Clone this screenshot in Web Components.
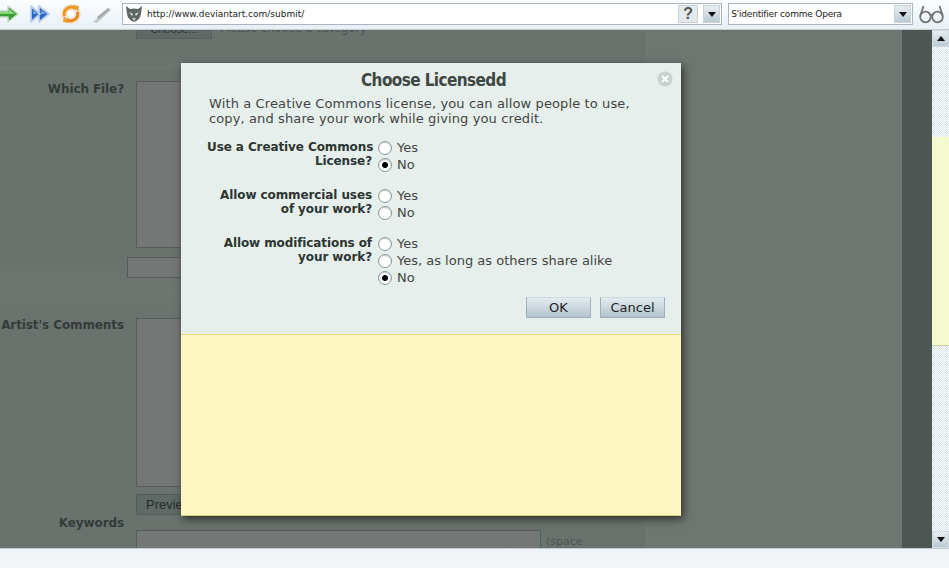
<!DOCTYPE html>
<html>
<head>
<meta charset="utf-8">
<title>Submit</title>
<style>
  html, body { margin: 0; height: 100%; overflow: hidden; }
  body { display: flex; flex-direction: column; width: 949px; height: 568px; font-family: "DejaVu Sans", sans-serif; }
</style>
</head>
<body>
<browser-toolbar></browser-toolbar>
<page-view>
  <license-dialog></license-dialog>
</page-view>
<status-strip></status-strip>

<script>
class BrowserToolbar extends HTMLElement {
  constructor() {
    super();
    this.attachShadow({ mode: "open" });
  }
  connectedCallback() {
    this.shadowRoot.innerHTML = `
      <style>
        :host {
          display: flex; align-items: center; flex: none; height: 30px; box-sizing: border-box;
          background: linear-gradient(#fbfdfe, #e8f0f5); border-bottom: 1px solid #c3ccd1;
          padding: 0 5px 1px 0; overflow: hidden;
        }
        svg { display: block; flex: none; }
        .nav { display: flex; align-items: center; gap: 9px; margin-left: -2px; margin-right: 9px; }
        .combo {
          display: flex; align-items: center; box-sizing: border-box; height: 22px; background: #fff;
          border: 1px solid #a9b6bd; font: 9px "DejaVu Sans", sans-serif; color: #222; white-space: nowrap;
        }
        .addr { width: 601px; }
        .addr .url { flex: 1; margin-left: 3px; }
        .fav { margin-left: 1px; }
        .btn {
          box-sizing: border-box; height: 18px; display: flex; align-items: center; justify-content: center;
          background: linear-gradient(#e7eef2, #bccad3); border: 1px solid #c7d1d7;
        }
        .q { width: 20px; font: bold 16px "Liberation Sans", sans-serif; color: #555; background: #e3e9ec; margin-right: 5px; }
        .dd { width: 17px; margin-right: 1px; flex: none; }
        .dd::after { content: ""; border: 4px solid transparent; border-top: 5px solid #111; border-bottom: 0; }
        .who { width: 185px; margin-left: 6px; }
        .who .name { flex: 1; margin-left: 2px; letter-spacing: -.2px; }
        .glasses { margin-left: 6px; }
      </style>
      <div class="nav">
        <svg width="22" height="22" viewBox="0 0 22 22"><path d="M1 8h9V3l10 8-10 8v-5H1z" fill="#35a032" stroke="#c9d8ca" stroke-width="1.500" stroke-linejoin="round"/><path d="M2 9h9V6l6 5H2z" fill="#86d978"/></svg>
        <svg width="22" height="22" viewBox="0 0 22 22"><path d="M2 3l9 8-9 8zM10 3l10 8-10 8z" fill="#2a66c8" stroke="#bcd0ea" stroke-width="1.800" stroke-linejoin="round"/><path d="M4 7l5 4H4zM12 7l5 4h-5z" fill="#6ea3ea"/></svg>
        <svg width="22" height="22" viewBox="0 0 22 22"><circle cx="11" cy="11" r="10" fill="#eddcc0" opacity=".7"/><path d="M4.500 13A7 7 0 0 1 16 6" fill="none" stroke="#ee9420" stroke-width="3"/><path d="M17.500 9A7 7 0 0 1 6 16" fill="none" stroke="#ea851c" stroke-width="3"/><path d="M13 2l6 1-1 6zM9 20l-6-1 1-6z" fill="#f0a030"/><circle cx="11" cy="11" r="3.500" fill="#fff"/></svg>
        <svg width="22" height="22" viewBox="0 0 22 22"><path d="M2 19L17 6l3 1L6 20z" fill="#c3c9cb"/><path d="M6 14l11-9 2 1-11 10z" fill="#a0a8ab"/></svg>
      </div>
      <div class="combo addr">
        <svg class="fav" width="20" height="18" viewBox="0 0 20 18"><path d="M2 1l4 3q4-1 8 0l4-3-1 8q-1 6-7 8-6-2-7-8z" fill="#5d6664"/><path d="M5 7l4 2-1 2zM15 7l-4 2 1 2z" fill="#e4e9e7"/><path d="M8 13h4l-2 3z" fill="#c5cdca"/></svg>
        <span class="url">http://www.deviantart.com/submit/</span>
        <span class="btn q">?</span>
        <span class="btn dd"></span>
      </div>
      <div class="combo who"><span class="name">S'identifier comme Opera</span><span class="btn dd"></span></div>
      <svg class="glasses" width="25" height="20" viewBox="0 0 25 20" fill="none" stroke="#6e7476" stroke-width="1.800"><circle cx="6.500" cy="13" r="5.300"/><circle cx="18.500" cy="13" r="5.300"/><path d="M11.500 11.500q1-1 2 0M1.500 11l3-9M23.500 11l-3-9"/></svg>
    `;
  }
}

class FormRow extends HTMLElement {
  constructor() {
    super();
    this.attachShadow({ mode: "open" });
  }
  connectedCallback() {
    this.shadowRoot.innerHTML = `
      <style>
        :host { display: grid; grid-template-columns: 124px 1fr; column-gap: 12px; }
        .label { font: bold 12px/16px "DejaVu Sans", sans-serif; color: #333c38; text-align: right; white-space: nowrap; letter-spacing: -.1px; margin-top: var(--label-top, 0); }
      </style>
      <div class="label">${this.getAttribute("label") || ""}</div>
      <div><slot></slot></div>
    `;
  }
}

class PageView extends HTMLElement {
  constructor() {
    super();
    this.attachShadow({ mode: "open" });
  }
  connectedCallback() {
    this.shadowRoot.innerHTML = `
      <style>
        :host { display: flex; flex: none; height: 518px; position: relative; overflow: hidden; background: #6e7672; }
        .form { width: 645px; flex: none; background: #6a726e; display: flex; flex-direction: column; overflow: hidden; }
        .gap { flex: 1; }
        .dark { width: 30px; flex: none; background: #4d5652; }
        .band { flex: none; box-sizing: border-box; }
        .top { height: 40px; display: flex; padding-left: 136px; align-items: flex-start; gap: 8px; background: linear-gradient(#6a726e 60%, #6d7571); }
        .choose { box-sizing: border-box; width: 76px; height: 20px; margin-top: -11px; background: #5f6866; border: 1px solid #555e5b; font: 11px/18px "Liberation Sans", sans-serif; color: #2c3431; text-align: center; flex: none; }
        .hint { font: 11.500px/1 "DejaVu Sans", sans-serif; color: #4c5551; margin-top: -7px; white-space: nowrap; }
        .which { height: 221px; padding-top: 11px; background: linear-gradient(#6a726e 85%, #6e7672); }
        .comments { height: 257px; padding-top: 27px; background: linear-gradient(#6e7672, #6a726e 12%); --label-top: -1px; }
        .which { --label-top: 0px; }
        .box { box-sizing: border-box; background: #737776; border: 1px solid #545d59; }
        .b1 { width: 400px; height: 167px; }
        .input { width: 400px; height: 21px; margin: 9px 0 0 -9px; }
        .b2 { width: 400px; height: 169px; }
        .prev { box-sizing: border-box; width: 90px; height: 21px; margin-top: 7px; background: #5f6966; border: 1px solid #555e5a; font: 13px/19px "Liberation Sans", sans-serif; color: #252c29; padding-left: 9px; }
        .kw-row { margin-top: 1px; }
        .kw-line { display: flex; gap: 5px; align-items: flex-start; padding-top: 14px; }
        .kw-input { width: 405px; height: 30px; border-bottom: 0; flex: none; }
        .space { font: 11px/14px "DejaVu Sans", sans-serif; color: #4c5551; padding-top: 5px; }
        .scroll { width: 17px; flex: none; display: flex; flex-direction: column;
          background-color: #fff;
          background-image: conic-gradient(#d7e1e8 25%, #fff 0 50%, #d7e1e8 0 75%, #fff 0);
          background-size: 2px 2px; }
        .arrow { height: 17px; flex: none; box-sizing: border-box; background: linear-gradient(#e7eef2, #bccad3); border: 1px solid #d2dbe0; display: flex; align-items: center; justify-content: center; }
        .arrow::after { content: ""; border: 4px solid transparent; }
        .up::after { border-bottom: 5px solid #111; border-top: 0; }
        .down::after { border-top: 5px solid #111; border-bottom: 0; }
        .track { flex: 1; padding-top: 90px; }
        .thumb { height: 209px; box-sizing: border-box; background: #f4facd; border-bottom: 1px solid #c9d3a5; }
      </style>
      <div class="form">
        <div class="band top"><div class="choose">Choose...</div><div class="hint">Please choose a category</div></div>
        <div class="band which"><form-row label="Which File?"><div class="box b1"></div><div class="box input"></div></form-row></div>
        <div class="band comments">
          <form-row label="Artist's Comments"><div class="box b2"></div><div class="prev">Preview</div></form-row>
          <form-row class="kw-row" label="Keywords"><div class="kw-line"><div class="box kw-input"></div><div class="space">(space</div></div></form-row>
        </div>
      </div>
      <div class="gap"></div>
      <div class="dark"></div>
      <div class="scroll"><div class="arrow up"></div><div class="track"><div class="thumb"></div></div><div class="arrow down"></div></div>
      <slot></slot>
    `;
  }
}

class RadioOption extends HTMLElement {
  constructor() {
    super();
    this.attachShadow({ mode: "open" });
  }
  connectedCallback() {
    const on = this.hasAttribute("checked");
    this.shadowRoot.innerHTML = `
      <style>
        :host { display: flex; align-items: center; gap: 5px; height: 17px; font: 13px "DejaVu Sans", sans-serif; color: #444; white-space: nowrap; }
        i { display: block; box-sizing: border-box; width: 14px; height: 14px; border-radius: 50%; border: 1px solid #8a969c;
            background: ${on ? "radial-gradient(circle, #000 0 2.5px, #fff 3.5px)" : "#fff"}; box-shadow: inset 0 1px 1px #c4cdd2; }
      </style>
      <i></i><span><slot></slot></span>
    `;
  }
}

class LicenseQuestion extends HTMLElement {
  constructor() {
    super();
    this.attachShadow({ mode: "open" });
  }
  connectedCallback() {
    this.shadowRoot.innerHTML = `
      <style>
        :host { display: grid; grid-template-columns: 165px 1fr; column-gap: 6px; }
        .q { font: bold 12px/14px "DejaVu Sans", sans-serif; color: #2e3532; text-align: right; white-space: pre; letter-spacing: -.1px; padding-top: 1px; }
      </style>
      <div class="q">${this.getAttribute("text")}</div>
      <div><slot></slot></div>
    `;
  }
}

class LicenseDialog extends HTMLElement {
  constructor() {
    super();
    this.attachShadow({ mode: "open" });
  }
  connectedCallback() {
    this.shadowRoot.innerHTML = `
      <style>
        :host { position: absolute; left: 181px; top: 33px; width: 500px; height: 453px; display: flex; flex-direction: column; box-shadow: 2px 3px 8px rgba(30,30,20,.8); }
        .top { height: 271px; flex: none; box-sizing: border-box; background: #e6efeb; padding: 7px 16px 0 28px; position: relative; }
        h1 { margin: 0 0 6px -28px; padding-left: 5px; box-sizing: border-box; width: 500px; text-align: center; font: bold 17px/20px "DejaVu Sans Condensed", "DejaVu Sans", sans-serif; color: #3f4744; letter-spacing: -.6px; }
        p { margin: 0 0 13px; font: 13px/15px "DejaVu Sans", sans-serif; color: #444; letter-spacing: .12px; }
        license-question { margin: 0 0 14px -2px; }
        .close { position: absolute; right: 8px; top: 8px; }
        .actions { display: flex; justify-content: flex-end; gap: 9px; margin-top: -3px; }
        .actions button { box-sizing: border-box; width: 65px; height: 21px; padding: 0; background: linear-gradient(#e3ebef, #b4c3ce); border: 1px solid #9fb0bc; border-top-color: #cfd9df; font: 13px "DejaVu Sans", sans-serif; color: #222; }
        .note { flex: 1; background: #fff6c0; border-top: 1px solid #e6d877; border-bottom: 1px solid #d8cc80; }
      </style>
      <div class="top">
        <h1>Choose Licensedd</h1>
        <svg class="close" width="16" height="16" viewBox="0 0 16 16"><circle cx="8" cy="8" r="7.500" fill="#c8d1cd"/><path d="M5 5l6 6M11 5l-6 6" stroke="#fff" stroke-width="2"/></svg>
        <p>With a Creative Commons license, you can allow people to use,<br>copy, and share your work while giving you credit.</p>
        <license-question text="Use a Creative Commons&#10;License?">
          <radio-option>Yes</radio-option><radio-option checked>No</radio-option>
        </license-question>
        <license-question text="Allow commercial uses&#10;of your work?">
          <radio-option>Yes</radio-option><radio-option>No</radio-option>
        </license-question>
        <license-question text="Allow modifications of&#10;your work?">
          <radio-option>Yes</radio-option><radio-option>Yes, as long as others share alike</radio-option><radio-option checked>No</radio-option>
        </license-question>
        <div class="actions"><button>OK</button><button>Cancel</button></div>
      </div>
      <div class="note"></div>
    `;
  }
}

class StatusStrip extends HTMLElement {
  constructor() {
    super();
    this.attachShadow({ mode: "open" });
  }
  connectedCallback() {
    this.shadowRoot.innerHTML = `
      <style>:host { display: block; flex: none; height: 20px; background: linear-gradient(#eef3f7, #f3f6f9); border-top: 1px solid #c3ccd1; box-sizing: border-box; }</style>
    `;
  }
}

customElements.define("form-row", FormRow);
customElements.define("radio-option", RadioOption);
customElements.define("license-question", LicenseQuestion);
customElements.define("license-dialog", LicenseDialog);
customElements.define("status-strip", StatusStrip);
customElements.define("browser-toolbar", BrowserToolbar);
customElements.define("page-view", PageView);
</script>
</body>
</html>
